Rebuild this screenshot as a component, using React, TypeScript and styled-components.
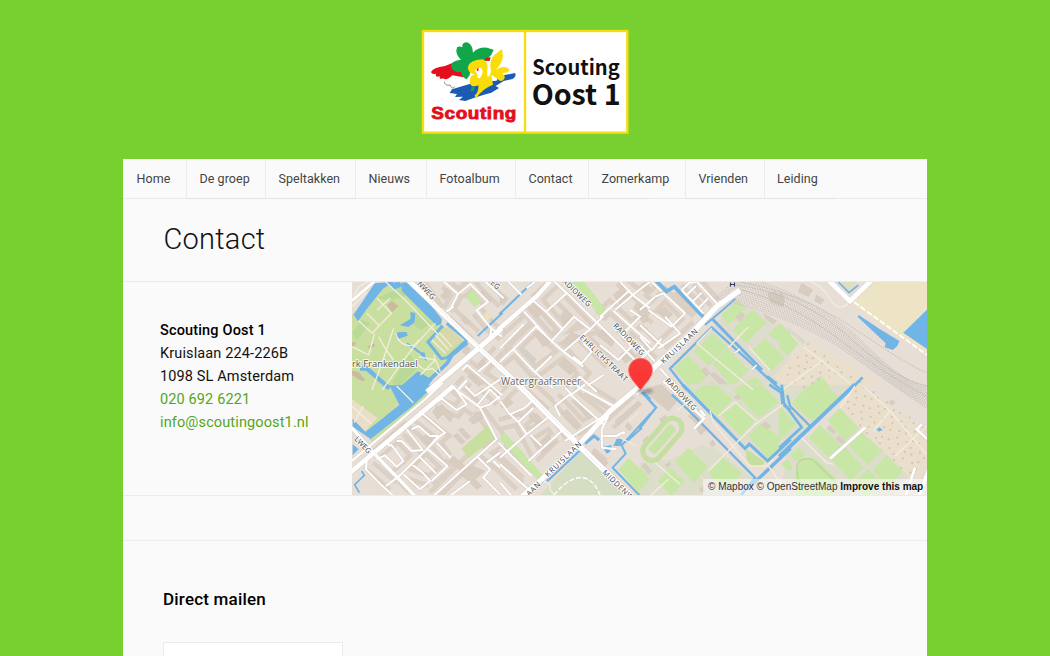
import React from "react";
import styled, { createGlobalStyle } from "styled-components";

const GlobalStyle = createGlobalStyle`
  * { box-sizing: border-box; }
  html, body { margin: 0; padding: 0; }
  body { background: #77d02f; font-family: Roboto, "Liberation Sans", sans-serif; color: #111; overflow: hidden; }
`;

const Page = styled.div`
  height: 656px;
  overflow: hidden;
  display: flex;
  flex-direction: column;
  align-items: center;
`;
const Header = styled.header`
  height: 159px;
  flex: none;
  padding-top: 29px;
`;
const LogoSvg = styled.svg`
  display: block;
  width: 208px;
  height: 105px;
`;
const Sheet = styled.main`
  width: 804px;
  flex: 1;
  background: #fafafa;
`;
const Nav = styled.nav`
  display: flex;
  height: 40px;
  border-bottom: 1px solid #ebebeb;
`;
const NavItem = styled.a<{ $width: number; $last?: boolean; $menu?: number }>`
  position: relative;
  width: ${(p) => p.$width}px;
  padding-left: ${(p) => (p.$last ? 12 : 12.5)}px;
  line-height: 39px;
  font-size: 12.5px;
  letter-spacing: 0.05px;
  white-space: nowrap;
  color: #444;
  border-right: ${(p) => (p.$last ? "0" : "1px solid #ececec")};
  &:first-child { padding-left: 13.5px; }
  &::after {
    content: "";
    display: ${(p) => (p.$menu ? "block" : "none")};
    position: absolute;
    left: 0;
    top: 39px;
    height: 1px;
    width: ${(p) => p.$menu ?? 0}px;
    background: #e2e2e2;
  }
`;
const TitleBar = styled.div`
  height: 83px;
  padding: 20px 0 0 40.5px;
  border-bottom: 1px solid #ebebeb;
`;
const Title = styled.h1`
  margin: 0;
  font-weight: 300;
  font-size: 29px;
  line-height: 41px;
  letter-spacing: 0.25px;
  color: #111;
`;
const ContactRow = styled.section`
  display: flex;
  height: 214px;
  border-bottom: 1px solid #ebebeb;
`;
const Address = styled.address`
  width: 229px;
  padding: 37px 0 0 37px;
  font-style: normal;
  font-size: 14.5px;
  line-height: 23px;
  white-space: nowrap;
`;
const Line = styled.div`
  letter-spacing: 0.13px;
`;
const Name = styled(Line)`
  font-weight: 500;
  letter-spacing: 0.16px;
  color: #000;
`;
const GreenLink = styled.a`
  color: #55a51c;
`;
const MapFrame = styled.div`
  position: relative;
  width: 575px;
  height: 213px;
  overflow: hidden;
`;
const MapSvg = styled.svg`
  display: block;
  width: 575px;
  height: 213px;
`;
const Attribution = styled.div`
  position: absolute;
  right: 0;
  bottom: 0;
  width: 224px;
  height: 16px;
  padding-left: 5px;
  background: rgba(255, 255, 255, 0.5);
  font: 10px/16px "Liberation Sans", sans-serif;
  letter-spacing: 0.01px;
  color: #333;
  white-space: nowrap;
  b { color: #111; }
`;
const Spacer = styled.div`
  height: 45px;
  border-bottom: 1px solid #ebebeb;
`;
const MailForm = styled.section`
  padding: 46px 0 0 40px;
`;
const FormTitle = styled.h2`
  margin: 0 0 30px;
  font-size: 17px;
  line-height: 25px;
  letter-spacing: 0.2px;
  font-weight: 500;
  color: #000;
`;
const Field = styled.div`
  width: 180px;
  height: 40px;
  background: #fff;
  border: 1px solid #ebebeb;
`;

const NAV = [
  { label: "Home", width: 64 },
  { label: "De groep", width: 79, menu: 79 },
  { label: "Speltakken", width: 90, menu: 90 },
  { label: "Nieuws", width: 71 },
  { label: "Fotoalbum", width: 89 },
  { label: "Contact", width: 73, menu: 134 },
  { label: "Zomerkamp", width: 97 },
  { label: "Vrienden", width: 79, menu: 150 },
  { label: "Leiding", width: 90, last: true },
];

function Logo() {
  return (
    <LogoSvg viewBox="18 21 624 315">
      <rect x="24" y="27" width="613" height="305" fill="#fff" stroke="#f8dc0c" strokeWidth="7" />
      <path d="M330 25V333" stroke="#f8dc0c" strokeWidth="7" />
      <path fill="#e30f1c" d="M48 150Q54 137 90 132L118 121L150 130L146 166L112 160Q94 178 84 169Q72 175 74 163Q59 167 63 155Q50 158 48 150Z" />
      <path d="M88 179Q91 193 105 189Q112 204 119 194" fill="none" stroke="#555" strokeWidth="2" />
      <path fill="#1c5bb4" d="M111 202L176 182L204 179L245 176L250 163L300 153Q306 163 293 171L266 177L242 192L252 198L229 212L207 218L176 228L151 237L132 234L144 224L120 225L126 216L104 213Z" />
      <path fill="#12a64b" d="M138 113Q119 96 126 76Q134 71 142 76Q140 61 156 61Q172 66 174 92Q189 75 216 77L236 83L229 98L211 117L187 120L169 132L164 160L155 172Q139 165 138 150L127 151Q110 146 108 132Q110 115 138 113Z" />
      <path fill="#e30f1c" d="M212 107L227 106L224 117L210 116Z" />
      <path fill="#f9dc08" d="M228 148Q221 113 239 98Q249 92 260 81Q270 110 252 132L241 146Q258 130 277 137Q288 144 278 151L260 154Q276 162 265 174Q255 182 244 168L229 159L234 188Q202 200 182 230L179 220Q192 209 190 190Q169 199 164 182Q163 166 172 160L181 158Q156 153 159 134Q164 115 202 112Q223 119 216 148L217 164L224 162Z" />
      <path fill="#fff" d="M180 145Q189 133 199 139Q208 153 195 168Q186 172 187 157Z" />
      <path fill="#e30f1c" d="M186 140L191 137L190 147L185 146Z" />
      <path d="M167 206L170 196L180 195L174 209Z" fill="#12a64b" />
      <text transform="translate(49 290) scale(1.16 1)" textLength="220" lengthAdjust="spacing" fontFamily="Liberation Sans" fontWeight="700" fontSize="49" fill="#e30f1c" stroke="#e30f1c" strokeWidth="2.5">Scouting</text>
      <text x="352" y="158" textLength="262" lengthAdjust="spacingAndGlyphs" fontFamily="Noto Sans CJK SC" fontWeight="700" fontSize="62" fill="#111">Scouting</text>
      <text x="350" y="248" textLength="267" lengthAdjust="spacingAndGlyphs" fontFamily="Noto Sans CJK SC" fontWeight="700" fontSize="85" fill="#111">Oost 1</text>
    </LogoSvg>
  );
}

type Tile = {
  x: number;
  y: number;
  fills?: [string, string][];
  water?: string;
  canals?: [number, string][];
  blocks?: string;
  houses?: string;
  paths?: string;
  roads?: [number, string][];
};

const PARK = "#c8df9f";
const FIELD = "#c8e6a6";
const WATER = "#71b4e6";
const LAND = "#e7ded6";
const BRICK = "#d9ccc0";
const SAND = "#ece4c4";
const PLOT = "#eadfcd";

// Each tile covers about 150 x 110 px of the map at three units per pixel.
const TILES: Tile[] = [
  {
    x: 352, y: 280,
    fills: [
      [PARK, "M0 105L65 30L140 5L270 135L340 185L225 300L195 335L0 335Z"],
      ["#b9d999", "M75 55L150 20L160 50L110 60ZM190 90L240 130L205 150L180 130ZM0 160L30 120L55 130L15 180ZM170 220L200 260L140 320L120 310Z"],
      ["#cdb9a0", "M105 75L120 62L139 78L120 97ZM0 185L14 190L0 205ZM46 200L66 190L70 197L52 207ZM0 272L20 276L40 300L30 304L0 285Z"],
      [FIELD, "M340 50L362 30L389 61L368 82Z"],
      ["#ede1bd", "M394 107L402 94L418 112L408 122Z"],
      ["#d8d9a8", "M244 180L288 140L330 178L280 222Z"],
    ],
    water: "M5 104L68 10L125 5L95 25L80 42L42 90L18 124ZM147 8L180 6L270 118L268 132L254 137L150 34ZM175 95L190 100L188 126L170 141L144 136L176 116ZM128 168L138 157L164 156L167 167L140 176ZM130 332L198 274L242 300L215 332ZM198 214L218 218L224 244L216 236ZM95 10L145 6L148 20L125 30L110 15Z",
    canals: [[9, "M272 137L228 186L268 236L286 233L345 180L284 130"], [11, "M346 188L300 225L285 250L225 307"], [13, "M24 266L44 265L112 325"], [6, "M165 190L203 217"], [6, "M377 168L452 98"]],
    houses: "M262 92L200 5M325 40L358 12L404 62M375 92L415 140L450 165M280 10L316 42L288 92M300 100L370 165M390 8L452 70M345 255L450 330M440 210L385 275M345 300L318 330",
    blocks: "M285 25L298 36L278 60L265 48ZM335 110L353 124L344 134L327 120ZM392 30L420 58L412 66L385 38ZM343 198L356 207L342 225L330 215ZM390 240L405 252L392 265L378 255ZM355 280L390 310L382 320L347 290Z",
    paths: "M0 60L20 20L50 5M20 122L60 160L118 100L75 55M45 100L80 135M75 90L115 55M0 200L50 225L68 160M80 170Q100 210 125 240M95 0L165 65L260 165M125 145Q120 160 95 235L60 330M200 180L105 310L90 330M130 160Q145 205 190 195L250 130M240 180L280 220M250 165L290 210M262 158L300 200M190 240Q210 280 240 265L270 290M200 230L250 240L205 285M245 225L265 275M0 80L45 35",
    roads: [[9, "M0 62L75 -3"], [6, "M270 0L318 42L296 86M318 42L355 12L408 65L374 91L413 140L450 170M283 95L305 80M330 272L345 255L450 345M378 275L420 240L395 215M318 330L345 300M400 5L455 55M415 170L418 140"]],
  },
  {
    x: 500, y: 280,
    fills: [[FIELD, "M215 5L252 5L318 90L302 108Z"], ["#d3d0ca", "M58 208L68 198L110 238L98 252Z"]],
    canals: [[6, "M-2 103L102 3"]],
    houses: "M105 62L165 5M72 92L155 184L270 148L185 60M40 205L108 140L190 215L105 278L40 205M0 245L42 210M155 184L230 115M245 170L330 250M110 60L188 148M300 110L330 80L420 165M360 170L420 120L450 140M360 0L450 75M190 215L250 280L210 330M0 190L80 120",
    blocks: "M182 105L198 90L218 108L190 130ZM85 85L100 72L128 100L112 113ZM188 185L215 155L235 166L205 198ZM305 150L345 178L335 200L290 165ZM340 45L370 20L395 42L360 75ZM195 235L230 265L210 285L175 255ZM410 70L450 95L440 120L400 85ZM360 225L390 205L410 230L375 250ZM0 35L25 55L10 75L0 70ZM100 160L120 145L155 183L130 200Z",
    roads: [[13, "M-5 149L112 47L155 -2"], [6, "M20 0L65 45M100 62L138 95L190 150M138 95L200 40L164 5M72 94L154 184L222 110L270 148L190 215L250 260M270 148L310 108M0 205L72 132M40 208L108 140L190 215M40 208L105 277L155 228M0 245L40 208M105 277L160 325M197 35L430 265M340 92L450 190M345 90L398 45L450 85M398 45L360 5M398 45L450 5M300 110L390 30M300 195L355 240L395 200L365 165L420 110L390 90M220 230L245 250L275 215L250 190M210 320L240 290L290 335M265 315L310 285M110 0L80 25"]],
  },
  {
    x: 640, y: 280,
    fills: [
      ["#dfdccf", "M95 265L215 148L280 55L450 150L450 335L140 335Z"],
      [LAND, "M285 35L450 90L450 150L320 75Z"],
      [FIELD, "M243 105L294 60L318 86L264 136ZM278 148L338 89L379 128L318 190ZM384 165L420 129L452 160L452 207ZM336 210L375 175L434 234L396 273ZM160 215L218 158L262 201L205 258ZM102 265L145 226L203 286L158 332ZM218 250L262 205L326 271L276 322ZM270 334L345 290L395 334ZM190 334L215 304L247 334Z"],
      [PLOT, "M450 235L400 290L450 330Z"],
    ],
    canals: [[11, "M48 2L80 34L103 20L193 114"], [6, "M286 57L228 107L195 135"], [7, "M140 330L90 266L215 142L425 332"], [9, "M217 117L366 270M381 289L410 312"]],
    houses: "M30 90L75 45L150 120M115 25L180 90M40 5L0 45M0 155L50 205M65 195L150 115M0 210L40 245M170 5L225 70",
    blocks: "M383 40L405 35L435 62L425 80L390 65ZM288 112L305 97L315 106L298 125ZM370 100L410 122L400 132L380 118ZM210 282L225 278L265 315L250 325ZM50 95L75 80L98 103L80 120ZM5 25L20 8L32 25L15 40ZM185 270L195 262L210 278L200 290ZM0 115L15 105L25 120L10 130Z",
    paths: "M170 190L340 330M215 145L170 190M265 203L325 140M325 200L390 270M250 60L280 30",
    roads: [[16, "M300 30L230 80L155 160L50 255L0 305"], [6, "M125 30L148 8L170 5L235 75M125 30L190 100M140 45L168 18M158 65L185 38M176 84L204 55M0 90L45 50L70 40L135 100L95 140L25 90M30 0L65 35M0 135L70 200M75 110L120 160L55 205M0 170L35 210L65 175M0 195L45 245M0 240L30 210M60 265L110 320"], [4, "M285 218L300 207M334 271L350 255"]],
  },
  {
    x: 780, y: 280,
    fills: [
      [SAND, "M265 5L445 5L445 227L215 73Z"],
      [FIELD, "M-2 130L55 191L25 228L-2 205ZM72 334L120 288L168 334Z"],
      [PLOT, "M0 285L85 182L290 300L340 335L165 335L120 285L70 335L0 335Z"],
      ["#dce0bf", "M174 8L230 5L207 40Z"],
      ["#d8d9c9", "M25 140L78 185L68 192L25 152Z"],
    ],
    water: "M236 105L300 148L358 183L352 198L338 210L314 202L317 190L233 110ZM370 158L445 85L445 210Z",
    canals: [[5, "M175 6L207 38L235 15"], [8, "M248 292L210 330"]],
    blocks: "M65 10L98 30L85 50L55 35ZM110 45L132 60L122 73L103 62ZM0 35L12 50L10 75L0 70Z",
    paths: "M75 0Q125 10 155 65Q180 95 205 70M70 200L118 238L210 310M0 335L130 240",
    roads: [[15, "M140 -5L210 64L275 0"]],
  },
  {
    x: 350, y: 386,
    fills: [
      [PARK, "M5 -2L120 -2L150 50L88 110L45 135L5 85Z"],
      ["#e9dfc9", "M5 38L83 97L45 135L5 90Z"],
      [PARK, "M255 0L270 0L70 170L58 160ZM335 188L414 117L434 155L356 216Z"],
    ],
    water: "M118 -2L254 -2L185 62L62 159L8 122L8 98L46 137L95 100L148 56ZM8 175L26 190L8 207Z",
    canals: [[5, "M35 255L43 268L14 296L28 320"]],
    houses: "M80 205L165 130L232 188M145 150L200 210L140 265M200 90L275 150L225 190M235 190L290 245L240 285M165 260L240 285M262 50L320 75L340 50L375 75M60 240L130 300M385 70L450 155M310 0L380 60M260 175L290 215M250 330L390 190L450 240M150 270L190 310M400 200L450 170M400 0L450 45",
    blocks: "M248 75L275 55L310 90L300 108L280 85L262 100ZM310 150L322 142L346 167L335 175ZM325 132L336 125L362 153L350 160ZM355 100L390 75L405 92L370 115ZM310 210L345 240L330 252L298 225ZM330 265L365 240L405 255L375 280L395 300L380 310L350 282ZM210 160L230 145L250 165L230 180Z",
    paths: "M140 0L190 50M5 60L65 115M40 60L12 110",
    roads: [[7, "M5 225L225 40L278 -10"], [14, "M0 260L75 198L215 80L310 0"], [10, "M5 125L70 200L195 330"], [6, "M80 220L105 208L140 242L160 225L135 190L122 175M105 165L120 180M140 165L155 165L185 195L218 192L170 130M185 130L205 120L240 150L265 150L232 188L270 150L285 140L208 75M232 188L150 268L108 300M232 188L292 240L245 285M185 235L220 262L240 285L210 310L160 265M208 212L258 262M50 225L48 250L95 298L130 330M260 170L302 215M255 50L275 38L320 72L350 55L310 0M345 0L375 30L450 -20M310 5L390 65L420 55L450 30M390 65L440 160L250 330M380 60L420 10L450 40M380 210L420 250L400 275L450 325M410 230L450 200M300 330L360 285M430 225L450 245"]],
  },
  {
    x: 500, y: 386,
    fills: [
      ["#d5dec2", "M115 335L240 195L385 335Z"],
      [FIELD, "M5 143L20 145L127 266L112 280L0 160ZM355 250L386 215L452 280L452 315L425 332Z"],
    ],
    water: "M308 182L335 177L330 198L320 203ZM350 158L370 158L362 180L340 180Z",
    canals: [[7, "M72 333L125 287M140 287L238 195"], [9, "M255 173L282 150L298 162"], [6, "M452 82L365 178L377 203L338 245L422 332M426 125L378 168M432 20L452 40"]],
    houses: "M65 110L110 70L150 110M0 40L40 0M75 155L150 110L185 165M165 35L250 125M225 30L300 90L225 135M260 10L340 60M0 190L80 265M0 115L55 100L110 210M100 215L165 150M90 0L155 60M0 240L60 300M330 115L410 40M270 200L310 235",
    blocks: "M85 90L100 77L125 103L110 115ZM185 85L200 70L245 120L230 132ZM225 55L240 45L280 90L265 100ZM345 105L415 45L425 55L355 118ZM0 60L25 35L40 50L15 70ZM110 180L145 150L165 170L130 205ZM375 120L385 110L398 125L388 135ZM428 165L442 150L450 160L450 185ZM280 195L325 230L310 245L270 210Z",
    paths: "M130 285Q155 290 150 310L165 330M360 155L410 180M388 105L415 80",
    roads: [[15, "M48 -10L235 178L395 335"], [15, "M425 -5L330 75L235 178L125 280L50 345"], [6, "M0 45L30 85L75 65L100 40M30 85L55 108L80 145L0 215M80 145L150 90M55 108L100 65M85 225L185 135M90 145L125 180M-5 170L95 270M0 235L85 310M0 290L35 330M210 25L310 115M210 25L165 60L180 90M230 0L340 60M195 5L215 25L255 -5M195 165L310 90M325 90L305 130L306 185L350 190M310 150L350 150Q380 130 370 145M440 5L410 25"]],
  },
  {
    x: 640, y: 386,
    fills: [
      ["#ddddcc", "M150 -5L450 -5L450 160L385 225L325 180L315 190L140 15ZM0 230L90 220L200 170L340 275L305 335L0 335Z"],
      [LAND, "M130 15L340 225L340 265L150 90ZM130 115L220 190L175 170Z"],
      [FIELD, "M160 22L186 -2L230 -2L277 41L233 91ZM245 88L295 50L348 101L302 151ZM282 15L302 -4L365 -4L416 49L356 97ZM325 150L365 110L438 170L386 220ZM105 225L145 185L204 242L160 292ZM205 258L250 215L306 262L278 292L232 290ZM53 285L90 243L133 285L94 330ZM0 242L28 280L0 312ZM425 235L452 210L452 260Z"],
      ["#c5df9d", "M320 190L375 228L365 240L340 243Q310 225 320 190Z"],
    ],
    canals: [[7, "M-2 10L48 65L-2 128"], [7, "M95 25L145 72L345 275L300 332"], [9, "M128 -4L315 188L328 174L383 225L452 160"], [10, "M325 307L452 187"], [8, "M388 -4L424 20L428 55L452 72"]],
    blocks: "M30 5L65 -5L112 45L85 75L20 20ZM145 90L175 70L195 100L170 115ZM166 122L178 110L197 133L182 147ZM58 100L75 88L82 97L67 110ZM5 240L15 232L35 255L25 265ZM208 172L218 162L227 174L218 182ZM365 118L375 107L392 120L382 130ZM75 238L88 228L92 235L80 245ZM178 310L190 302L195 315L185 320ZM283 35L292 26L303 35L296 42Z",
    paths: "M210 75L220 110L295 200L330 240L380 240L400 220M205 255L345 115L430 55M110 75L140 50M235 90L285 48L350 105M385 240L450 330M40 225L120 295M25 335L85 280",
    roads: [[8, "M70 -15L135 45L192 98L163 128"], [8, "M180 72L195 90"]],
  },
  {
    x: 780, y: 386,
    fills: [
      ["#ddddcc", "M-2 -2L225 -2L0 220ZM20 205L180 70L385 270L330 335L0 335Z"],
      [PLOT, "M230 0L445 135L445 275L385 270L180 68Z"],
      [LAND, "M85 140L180 65L195 80L85 170ZM320 -5L445 -5L445 115L250 0Z"],
      [FIELD, "M35 50L75 10L134 78L95 105ZM75 10L92 -4L143 -4L179 40L134 82ZM-2 60L48 113L-2 165ZM142 103L180 66L236 125L195 164ZM85 155L120 117L185 180L150 215ZM204 175L240 135L306 196L262 238ZM155 220L195 183L250 246L213 285ZM280 250L320 208L369 255L322 305ZM33 208L57 184L76 205L48 228ZM5 235L25 218L38 250L25 253ZM222 290L264 250L305 290L260 335Z"],
      [FIELD, "M55 240Q70 205 110 220L175 285L150 335L50 335Q38 280 55 240Z"],
    ],
    water: "M290 130L298 124L308 132L296 137Z",
    canals: [[12, "M-2 212L225 -5"], [8, "M5 -4L12 52L65 124L-2 185"], [7, "M22 28L30 60L90 120"]],
    blocks: "M140 125L148 118L167 136L160 144ZM168 158L178 150L195 167L185 174ZM326 48L338 42L345 50L335 58Z",
    paths: "M250 0L330 75L440 205M330 75L280 135M440 120L345 210M65 155L140 230L160 235M225 0L180 65",
    roads: [[9, "M150 218L255 125"], [8, "M445 162L410 130L425 115"], [8, "M375 335L405 245"], [12, "M415 335L445 255"]],
  },
];

const LABELS: { text: string; x: number; y: number; angle: number; anchor?: "start" | "end" | "middle"; length?: number }[] = [
  { text: "NWEG", x: 432, y: 300, angle: 47, anchor: "end" },
  { text: "EG", x: 497, y: 290, angle: 44, anchor: "end" },
  { text: "ADIOWEG", x: 588, y: 307, angle: 44, anchor: "end", length: 36 },
  { text: "RADIOWEG", x: 627, y: 341, angle: 46, length: 41 },
  { text: "EHRLICHSTRAAT", x: 602, y: 360, angle: 44, length: 63 },
  { text: "KRUISLAAN", x: 681, y: 348, angle: -43, length: 47 },
  { text: "RADIOWEG", x: 679, y: 396, angle: 46, length: 41 },
  { text: "KRUISLAAN", x: 565, y: 461, angle: -44, length: 47 },
  { text: "LAAN", x: 541, y: 485, angle: -44, anchor: "end", length: 21 },
  { text: "MIDDENWEG", x: 602, y: 473, angle: 44, anchor: "start", length: 50 },
  { text: "LWEG", x: 368, y: 454, angle: 46, anchor: "end" },
];

const at = (t: Tile) => `translate(${t.x} ${t.y}) scale(.33333)`;

const RAILS = Array.from({ length: 14 }, (_, i) => {
  const s = i * 1.6;
  return `M${715 + i * 2} ${298 - s * 1.1}Q${800 + s} ${318 - s * 0.9} ${852 + s * 0.6} ${356 - s * 0.6}T930 ${410 - s * 1.15}`;
}).join("");

// Allotment huts: rows running along the railway, slightly staggered.
const TREES = Array.from({ length: 171 }, (_, i) => {
  const col = i % 19;
  const row = Math.floor(i / 19);
  const u = col * 8.6 + (row % 2) * 4 + ((i * 7) % 5) * 0.7;
  const v = row * 7.6 + ((i * 11) % 7) * 0.6;
  return { x: 808 + u * 0.83 - v * 0.6, y: 344 + u * 0.6 + v * 0.72 };
});

function StreetMap() {
  return (
    <MapSvg viewBox="352 282 575 213">
      <defs>
        <clipPath id="plots"><path d="M780 373L806 341L877 380L927 428V478L905 475L842 409L857 386L832 376L804 390Z" /></clipPath>
        <filter id="soft" x="-50%" y="-50%" width="200%" height="200%"><feGaussianBlur stdDeviation="1.6" /></filter>
        <linearGradient id="pin" x1="0" y1="0" x2="0" y2="1">
          <stop offset="0" stopColor="#fb3b3b" /><stop offset="1" stopColor="#f93434" />
        </linearGradient>
      </defs>
      <rect x="352" y="282" width="575" height="213" fill={LAND} />
      {TILES.map((t, i) => t.houses && (
        <g key={i} transform={at(t)} fill="none" strokeLinejoin="miter">
          <path d={t.houses} stroke="#dccfc3" strokeWidth="42" />
        </g>
      ))}
      {TILES.map((t, i) => t.houses && (
        <g key={i} transform={at(t)} fill="none">
          <path d={t.houses} stroke={LAND} strokeWidth="15" />
        </g>
      ))}
      {TILES.map((t, i) => (
        <g key={i} transform={at(t)}>
          {t.fills?.map(([color, d], k) => <path key={k} d={d} fill={color} />)}
          <path d={t.blocks} fill={BRICK} stroke="#cfc0b2" strokeWidth="1" />
        </g>
      ))}
      <g clipPath="url(#plots)">{TREES.map((p, i) => <circle key={i} cx={p.x} cy={p.y} r="1.1" fill="#d6c4ac" />)}</g>
      {TILES.map((t, i) => (
        <g key={i} transform={at(t)} fill="none">
          <path d={t.water} fill={WATER} />
          {t.canals?.map(([w, d], k) => <path key={k} d={d} stroke={WATER} strokeWidth={w} />)}
          <path d={t.paths} stroke="#f3eddc" strokeWidth="4" strokeLinejoin="round" />
        </g>
      ))}
      <g transform="rotate(-49 662 439)" fill="none">
        <rect x="637" y="430" width="50" height="19" rx="9.5" stroke="#c5dfa0" strokeWidth="5" fill={LAND} />
        <rect x="645" y="435" width="34" height="9" rx="3" fill="#c6e4a5" />
      </g>
      <path d="M808 493L798 478Q794 461 804 459Q812 457 818 465L836 482" fill="none" stroke="#b5d796" strokeWidth="1.3" />
      <path d={RAILS} fill="none" stroke="#bcb8b4" strokeWidth=".85" strokeDasharray="1.5 1.3" />
      <path d="M735 285Q800 293 850 338T930 386M738 289Q790 302 840 340T930 398M725 280Q795 288 858 331T930 373" fill="none" stroke="#b4b0ad" strokeWidth=".9" strokeDasharray="1.5 1.3" />
      <path d="M854 302L927 355" stroke="#fff" strokeWidth="1.8" strokeDasharray="6 2" />
      <path d="M554 495Q565 481 577 478Q592 475 600 495" fill="none" stroke="#fff" strokeWidth="1.3" strokeDasharray="5 2" />
      {["#cbc1b8", "#ffffff"].map((color, pass) => (
        <g key={color} fill="none" stroke={color} strokeLinejoin="round">
          {TILES.map((t, i) => (
            <g key={i} transform={at(t)}>
              {t.roads?.map(([w, d], k) => (
                <path key={k} d={d} strokeWidth={pass ? w : w + 3} strokeDasharray={pass ? undefined : "4 3"} />
              ))}
            </g>
          ))}
          <path d="M406 278L479 348L520 386L580 446L632 497" strokeWidth={pass ? 5 : 6} strokeDasharray={pass ? undefined : "1.3 1"} />
          <path d="M427 392L479 348L502 328" strokeWidth={pass ? 5 : 6} />
        </g>
      ))}
      <path d="M432 302L520 386L570 435M585 452L605 471" fill="none" stroke="#d1cac4" strokeWidth=".7" strokeDasharray="1.3 1.3" />
      <g fontFamily="Open Sans, Noto Sans, sans-serif" fill="#3e3e3e" stroke="#fff" strokeWidth="1.8" strokeOpacity=".85" paintOrder="stroke" strokeLinejoin="round">
        {LABELS.map((l, i) => (
          <text key={i} fontSize="7.4" transform={`translate(${l.x} ${l.y}) rotate(${l.angle})`} textAnchor={l.anchor ?? "middle"} textLength={l.length}>{l.text}</text>
        ))}
        <text x="352" y="366.500" fontSize="9.2" fill="#555" textLength="65.500" lengthAdjust="spacingAndGlyphs">rk Frankendael</text>
        <text x="501" y="384.500" fontSize="10" fill="#666" textLength="80" lengthAdjust="spacingAndGlyphs">Watergraafsmeer</text>
      </g>
      <path d="M730.500 282.500V286.500M734.500 282.500V286.500M730.500 284.500H734.500" stroke="#343b70" strokeWidth="1.1" />
      <ellipse cx="645" cy="391" rx="8" ry="3" fill="#555" opacity=".45" filter="url(#soft)" />
      <path d="M640.500 390L632 379.500Q628.500 375 628.500 370.500A12 12.300 0 0 1 652.500 370.500Q652.500 375 649 379.500Z" fill="url(#pin)" stroke="#fb7a73" strokeWidth=".8" />
    </MapSvg>
  );
}

export default function App() {
  return (
    <Page>
      <GlobalStyle />
      <Header><Logo /></Header>
      <Sheet>
        <Nav>
          {NAV.map((n) => (
            <NavItem key={n.label} $width={n.width} $last={n.last} $menu={n.menu}>{n.label}</NavItem>
          ))}
        </Nav>
        <TitleBar><Title>Contact</Title></TitleBar>
        <ContactRow>
          <Address>
            <Name>Scouting Oost 1</Name>
            <Line>Kruislaan 224-226B</Line>
            <Line>1098 SL Amsterdam</Line>
            <Line><GreenLink>020 692 6221</GreenLink></Line>
            <Line><GreenLink>info@scoutingoost1.nl</GreenLink></Line>
          </Address>
          <MapFrame>
            <StreetMap />
            <Attribution>© Mapbox © OpenStreetMap <b>Improve this map</b></Attribution>
          </MapFrame>
        </ContactRow>
        <Spacer />
        <MailForm>
          <FormTitle>Direct mailen</FormTitle>
          <Field />
        </MailForm>
      </Sheet>
    </Page>
  );
}
